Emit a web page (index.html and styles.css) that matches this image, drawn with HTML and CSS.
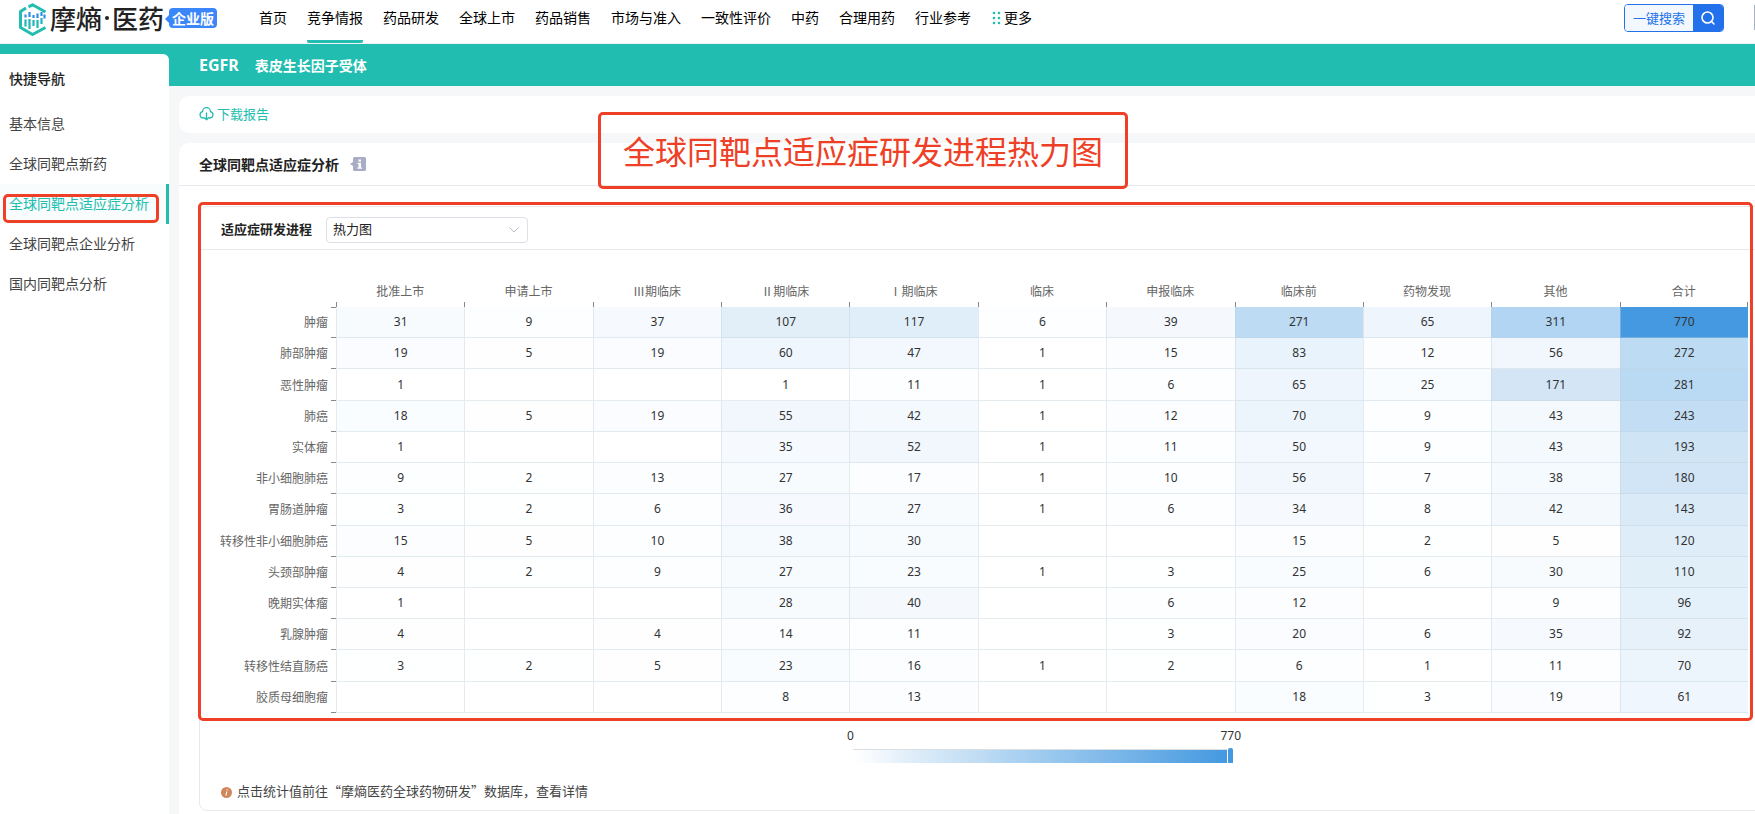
FILE: index.html
```html
<!DOCTYPE html>
<html lang="zh-CN">
<head>
<meta charset="utf-8">
<title>EGFR 表皮生长因子受体</title>
<link rel="stylesheet" href="styles.css">
</head>
<body>
<header class="topbar">
  <a class="brand" href="#">
    <svg class="brand-mark" width="30" height="34" viewBox="0 0 30 34" fill="none">
      <g stroke="#20bdb0" stroke-width="3" stroke-linejoin="round">
        <path d="M8 5 2.500 8.500V24.500L14.500 31.500 27.500 24.500"/>
        <path d="M10.500 3.800 14.500 1.800 27.500 9"/>
      </g>
      <g stroke="#2d8fe8" stroke-width="2.200"><path d="M7.500 11.500v3M11.500 9v5M15.500 12v3M19.500 10.500v4.500M23.500 9v4M26.500 11.500v4"/></g>
      <g stroke="#20b5b8" stroke-width="2.200"><path d="M7.500 16.500v7M11.500 16v10M15.500 17v6M19.500 17v8M23.500 15v6"/></g>
    </svg>
    <span class="brand-name">摩熵<i class="brand-dot"></i>医药</span>
    <span class="edition">企业版</span>
  </a>
  <nav class="menu">
    <a href="#">首页</a>
    <a href="#" class="current">竞争情报</a>
    <a href="#">药品研发</a>
    <a href="#">全球上市</a>
    <a href="#">药品销售</a>
    <a href="#">市场与准入</a>
    <a href="#">一致性评价</a>
    <a href="#">中药</a>
    <a href="#">合理用药</a>
    <a href="#">行业参考</a>
    <a href="#" class="more"><svg width="10" height="14" viewBox="0 0 10 14" fill="#20bdb0"><circle cx="3" cy="2" r="1.300"/><circle cx="8" cy="2" r="1.300"/><circle cx="3" cy="7" r="1.300"/><circle cx="8" cy="7" r="1.300"/><circle cx="3" cy="12" r="1.300"/><circle cx="8" cy="12" r="1.300"/></svg>更多</a>
  </nav>
  <form class="search">
    <button type="button" class="search-text">一键搜索</button>
    <button type="button" class="search-go" aria-label="搜索"><svg width="16" height="16" viewBox="0 0 16 16" fill="none" stroke="#fff" stroke-width="1.600" stroke-linecap="round"><circle cx="7.500" cy="7.500" r="5.500"/><path d="m11.500 11.500 2.500 2.500"/></svg></button>
  </form>
  <span class="avatar"></span>
</header>

<div class="shell">
  <aside class="side">
    <nav class="side-nav">
      <h2>快捷导航</h2>
      <a href="#">基本信息</a>
      <a href="#">全球同靶点新药</a>
      <a href="#" class="active">全球同靶点适应症分析<span class="mark mark-side"></span></a>
      <a href="#">全球同靶点企业分析</a>
      <a href="#">国内同靶点分析</a>
    </nav>
  </aside>
  <div class="content">
    <div class="target"><h1>EGFR</h1><span>表皮生长因子受体</span></div>
    <main class="cards">
      <section class="card download">
        <a href="#"><svg width="15" height="14" viewBox="0 0 15 14" fill="none" stroke="#20bdb0" stroke-width="1.300" stroke-linecap="round" stroke-linejoin="round"><path d="M4.500 11H4A3.200 3.200 0 0 1 3.500 4.700 4 4 0 0 1 11.500 4.700 3.200 3.200 0 0 1 11 11h-.5M7.500 6v6.800M5.500 10.800l2 2 2-2"/></svg>下载报告</a>
      </section>
      <section class="card analysis">
        <div class="card-head">
          <h2>全球同靶点适应症分析</h2>
          <svg width="16" height="14" viewBox="0 0 16 14"><path fill="#a9adc4" d="M4 0h10.500Q16 0 16 1.500v11Q16 14 14.500 14H4.500Q3 14 3 12.500V9L0 7l3-2V1.500Q3 0 4.500 0z"/><path fill="#fff" d="M8.500 2.500h2.500v2H8.500zM7.500 5.800H11v4.700h1v1.200H7.500v-1.200h1V7h-1z"/></svg>
          <strong class="callout">全球同靶点适应症研发进程热力图</strong>
        </div>
        <div class="panel">
          <div class="panel-head">
            <label for="view">适应症研发进程</label>
            <span class="picker">
              <select id="view"><option>热力图</option></select>
              <svg width="12" height="8" viewBox="0 0 12 8" fill="none" stroke="#b8bcc6"><path d="m1.500 1.500 4.500 4.500 4.500-4.500"/></svg>
            </span>
          </div>
          <table class="heat">
            <colgroup><col class="name-col"></colgroup>
            <thead><tr id="stages"><td></td></tr></thead>
            <tbody id="rows"></tbody>
          </table>
          <div class="legend">
            <div class="legend-scale"><span>0</span><span>770</span></div>
            <div class="legend-bar"></div>
          </div>
          <p class="note"><svg width="11" height="11" viewBox="0 0 11 11"><circle cx="5.500" cy="5.500" r="5.500" fill="#d1865c"/><path stroke="#fff" stroke-width="1.200" d="M6.300 2.300 6.100 3.300M5.800 4.500 5 8.500"/></svg>点击统计值前往“摩熵医药全球药物研发”数据库，查看详情</p>
          <span class="mark mark-chart"></span>
        </div>
      </section>
    </main>
  </div>
</div>
<script src="heat.js"></script>
</body>
</html>
```
FILE: styles.css
```css
* { box-sizing: border-box; }
body {
  margin: 0;
  min-height: 100vh;
  display: flex;
  flex-direction: column;
  overflow: hidden;
  background: #f6f7f9;
  color: #222;
  font: 14px/20px "Noto Sans CJK SC", sans-serif;
}
a { color: inherit; text-decoration: none; }
h1, h2, p { margin: 0; }
svg { flex: none; }

.topbar {
  display: flex;
  align-items: flex-start;
  height: 44px;
  padding-left: 18px;
  background: #fff;
  color: #000;
  border-bottom: 1px solid #f0f3f5;
}
.brand { display: flex; align-items: center; width: 241px; height: 36px; }
.brand-mark { margin-top: 4px; }
.brand-name { display: flex; align-items: center; margin-left: 2px; color: #222; font-size: 26px; line-height: 36px; font-weight: 500; }
.brand-dot { width: 4px; height: 4px; margin: 0 3px; border-radius: 50%; background: #222; }
.edition {
  position: relative;
  margin-left: 5px;
  padding: 0 3px;
  border-radius: 4px;
  background: #3a86fa;
  color: #fff;
  font-size: 14px;
  line-height: 20px;
  font-weight: 700;
}
.edition::before {
  content: "";
  position: absolute;
  left: -4px;
  top: 7px;
  border: 4px solid transparent;
  border-left: 0;
  border-right-color: #3a86fa;
}
.menu { display: flex; gap: 20px; flex: 1; white-space: nowrap; }
.menu a { height: 43px; padding-top: 7px; }
.menu .current { border-bottom: 3px solid #20bdb0; border-radius: 2px; }
.menu .more { display: flex; gap: 3px; }
.more svg { margin-top: 4px; }
.search { display: flex; width: 100px; height: 28px; margin: 4px 30px 0 0; border: 1px solid #2371ea; border-radius: 4px; overflow: hidden; }
.search button { border: 0; padding: 0; font: inherit; }
.search-text { flex: 1; background: #f3f8ff; color: #2371ea; }
.search .search-text { font-size: 13px; }
.search-go { display: flex; align-items: center; justify-content: center; width: 30px; background: #2371ea; }
.avatar { width: 1px; height: 25px; margin-top: 5px; background: #a9b0c0; }

.shell { display: flex; flex: 1; }
.side { flex: none; width: 169px; padding-top: 10px; background: #20bdb0; }
.side-nav { display: flex; flex-direction: column; height: 100%; background: #fff; border-radius: 0 6px 0 0; color: #444; line-height: 38px; }
.side-nav h2 { padding: 0 0 2px 9px; font-size: 14px; line-height: 48px; font-weight: 500; color: #222; }
.side-nav a { padding: 0 0 2px 9px; }
.side-nav .active { position: relative; border-right: 3px solid #20bdb0; background: #f8fcfc; color: #20bdb0; }

.content { flex: 1; min-width: 0; display: flex; flex-direction: column; }
.target { display: flex; align-items: center; gap: 16px; height: 42px; padding-left: 30px; background: #20bdb0; color: #fff; font-weight: 700; }
.target h1 { font: 700 16px/24px "Noto Sans", sans-serif; }
.cards { flex: 1; display: flex; flex-direction: column; gap: 10px; margin-right: -40px; padding: 10px 0 0 10px; }
.card { background: #fff; border-radius: 10px; }
.download { padding: 8px 20px 9px; color: #20bdb0; font-size: 13px; }
.download a { display: flex; align-items: center; gap: 3px; }
.analysis { flex: 1; border-bottom-left-radius: 0; }
.card-head { position: relative; display: flex; align-items: center; gap: 11px; height: 43px; padding-left: 20px; border-bottom: 1px solid #e8e9ec; }
.card-head h2 { font-size: 14px; font-weight: 700; }
.panel { position: relative; margin: 20px 20px 0; border: 1px solid #e8e9ec; border-radius: 8px; }
.panel-head { display: flex; align-items: center; gap: 14px; height: 43px; padding: 3px 0 0 21px; border-bottom: 1px solid #e8e9ec; font-size: 13px; }
.panel-head label { font-weight: 700; padding-bottom: 2px; }
.picker { position: relative; display: flex; align-items: center; }
.picker select { appearance: none; width: 202px; height: 26px; padding: 0 6px 2px; border: 1px solid #dcdfe6; border-radius: 4px; background: #fff; color: #222; font: inherit; }
.picker svg { position: absolute; right: 8px; pointer-events: none; }

.heat { width: calc(100% - 26px); height: 463px; table-layout: fixed; border-collapse: separate; border-spacing: 0; font-size: 12px; line-height: 16px; }
.name-col { width: 136px; }
.heat th, .heat td { position: relative; padding: 0; font-weight: 400; }
.heat thead tr { height: 57px; }
.heat thead th { padding-bottom: 8px; vertical-align: bottom; color: #666; }
.heat tbody th { padding: 0 8px 1px 0; text-align: right; color: #666; white-space: nowrap; }
.heat tbody td { border: solid rgba(190, 207, 218, .4); border-width: 0 0 1px 1px; text-align: center; color: #333; font-family: "Noto Sans", sans-serif; }
.heat thead th::after, .heat thead th:last-child::before { content: ""; position: absolute; left: 0; bottom: 0; width: 1px; height: 5px; background: #888; }
.heat thead th:last-child::before { left: auto; right: 0; }
.heat tbody th::after, .heat tbody tr:first-child th::before { content: ""; position: absolute; right: 0; bottom: 0; width: 5px; height: 1px; background: #888; }
.heat tbody tr:first-child th::before { top: 0; bottom: auto; }

.legend { width: 384px; margin: 14px 0 0 calc(50% - 136px); color: #333; }
.legend-scale { display: flex; justify-content: space-between; margin: 0 -6px 0 -4px; font: 12px/18px "Noto Sans", sans-serif; }
.legend-bar { position: relative; height: 14px; margin: 4px 8px 0 2px; border-top: 1px solid #d9dee3; background: linear-gradient(90deg, #fff, #f1f6fd 8%, #e2eff9 14%, #bddbf3 35%, #b1d5f2 40%, #4599e0); }
.legend-bar::after { content: ""; position: absolute; right: -6px; top: -2px; width: 5px; height: 15px; border-radius: 2px 2px 0 0; background: #4599e0; }
.note { display: flex; align-items: center; gap: 5px; padding: 18px 0 9px 21px; font-size: 13px; color: #444; }
.note svg { margin-top: 2px; }

.mark { position: absolute; border: 3px solid #ee4026; border-radius: 5px; pointer-events: none; }
.mark-side { left: 3px; top: 10px; width: 156px; height: 29px; }
.mark-chart { left: -2px; right: 21px; top: -5px; height: 519px; }
.callout { position: absolute; left: 419px; top: -31px; padding: 11px 22px 12px; border: 3px solid #ee4026; border-radius: 5px; color: #ee4026; font-size: 32px; line-height: 48px; font-weight: 400; white-space: nowrap; }
```
FILE: heat.js
```js
const stages = ["批准上市", "申请上市", "Ⅲ期临床", "Ⅱ期临床", "Ⅰ期临床", "临床", "申报临床", "临床前", "药物发现", "其他", "合计"];
const data = [
  ["肿瘤", 31, 9, 37, 107, 117, 6, 39, 271, 65, 311, 770],
  ["肺部肿瘤", 19, 5, 19, 60, 47, 1, 15, 83, 12, 56, 272],
  ["恶性肿瘤", 1, "", "", 1, 11, 1, 6, 65, 25, 171, 281],
  ["肺癌", 18, 5, 19, 55, 42, 1, 12, 70, 9, 43, 243],
  ["实体瘤", 1, "", "", 35, 52, 1, 11, 50, 9, 43, 193],
  ["非小细胞肺癌", 9, 2, 13, 27, 17, 1, 10, 56, 7, 38, 180],
  ["胃肠道肿瘤", 3, 2, 6, 36, 27, 1, 6, 34, 8, 42, 143],
  ["转移性非小细胞肺癌", 15, 5, 10, 38, 30, "", "", 15, 2, 5, 120],
  ["头颈部肿瘤", 4, 2, 9, 27, 23, 1, 3, 25, 6, 30, 110],
  ["晚期实体瘤", 1, "", "", 28, 40, "", 6, 12, "", 9, 96],
  ["乳腺肿瘤", 4, "", 4, 14, 11, "", 3, 20, 6, 35, 92],
  ["转移性结直肠癌", 3, 2, 5, 23, 16, 1, 2, 6, 1, 11, 70],
  ["胶质母细胞瘤", "", "", "", 8, 13, "", "", 18, 3, 19, 61]
];
const stops = [
  [0, 255, 255, 255], [15, 251, 253, 255], [35, 246, 250, 254], [60, 240, 246, 253],
  [107, 226, 239, 249], [171, 212, 230, 246], [271, 189, 219, 243], [311, 177, 213, 242], [770, 69, 153, 224]
];
function shade(value) {
  const i = Math.max(1, stops.findIndex(s => s[0] >= value));
  const a = stops[i - 1], b = stops[i];
  const t = (value - a[0]) / (b[0] - a[0]);
  return `rgb(${[1, 2, 3].map(k => Math.round(a[k] + (b[k] - a[k]) * t)).join(",")})`;
}
function cell(tag, text) {
  const el = document.createElement(tag);
  el.textContent = text;
  return el;
}
for (const name of stages) document.getElementById("stages").append(cell("th", name));
for (const [name, ...values] of data) {
  const tr = document.createElement("tr");
  tr.append(cell("th", name));
  for (const v of values) {
    const td = cell("td", v);
    td.style.backgroundColor = shade(Number(v));
    tr.append(td);
  }
  document.getElementById("rows").append(tr);
}
```
